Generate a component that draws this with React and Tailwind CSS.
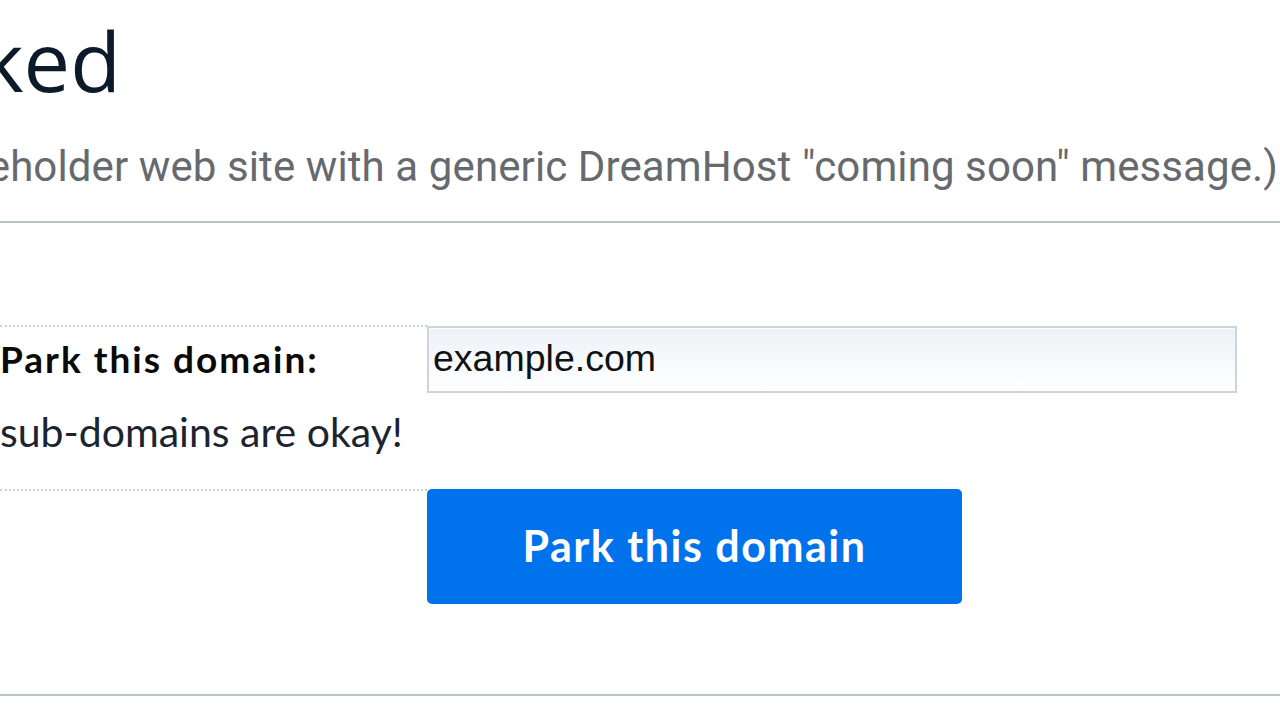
export default function App() {
  return (
    <div className="w-[1280px] h-[720px] overflow-hidden bg-white relative">
      {/* Heading */}
      <div className="flex justify-end w-[121px] pt-[18px]">
        <h1
          className="shrink-0 whitespace-nowrap text-[83px] leading-none text-[#0c1a2a]"
          style={{ fontFamily: '"Open Sans", sans-serif' }}
        >
          Parked
        </h1>
      </div>
      {/* Subtitle */}
      <div className="flex justify-end w-[1278px] mt-[45px]">
        <p
          className="shrink-0 whitespace-nowrap text-[42px] leading-none text-[#666a6e] tracking-[0.1px]"
          style={{ fontFamily: 'Roboto, sans-serif' }}
        >
          (The domain will show a placeholder web site with a generic DreamHost "coming soon" message.)
        </p>
      </div>
      <div className="mt-[33px] h-[2px] bg-[#b8c4cc]" />

      {/* Form */}
      <div className="mt-[102px] grid grid-cols-[427px_1fr]" style={{ fontFamily: 'Lato, sans-serif' }}>
        <div className="h-[166px] border-t-2 border-b-2 border-dotted border-[#c9d1d8] pt-[10px]">
          <div className="text-[37px] font-bold leading-[1.2] tracking-[2px] text-[#0a0a0a]">Park this domain:</div>
          <div className="mt-[26px] text-[41px] leading-[1.2] text-[#1c2430]">sub-domains are okay!</div>
        </div>
        <div className="pt-[1px]">
          <input
            readOnly
            value="example.com"
            className="w-[810px] h-[67px] border-2 border-[#ccd5dd] bg-gradient-to-b from-[#edf2f7] to-[#ffffff] pl-[4px] pb-[2px] text-[37.5px] text-[#111] outline-none shadow-[inset_0_1px_0_#ffffff]"
            style={{ fontFamily: '"Liberation Sans", Arial, sans-serif' }}
          />
        </div>
        <div />
        <div className="-mt-[2px]">
          <button
            className="w-[535px] h-[115px] rounded-[5px] bg-[#0073ec] text-white text-[43px] font-bold tracking-[1.5px]"
            style={{ fontFamily: 'Lato, sans-serif' }}
          >
            Park this domain
          </button>
        </div>
      </div>
      <div className="mt-[90px] h-[2px] bg-[#b8c4cc]" />
    </div>
  );
}
